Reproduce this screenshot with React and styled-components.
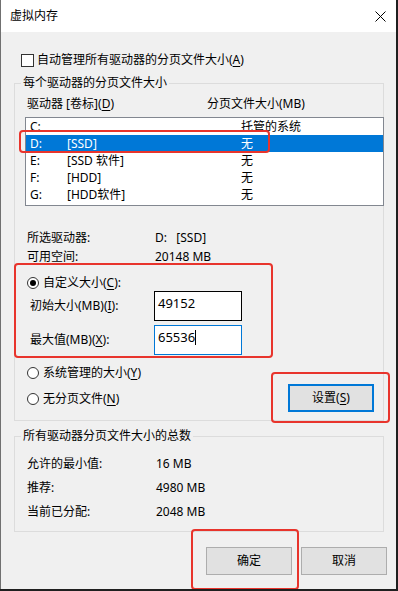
import React from 'react'
import styled, { createGlobalStyle } from 'styled-components'

// Windows 10 "虚拟内存" (virtual memory) dialog, with the red annotation frames on top.

const GlobalStyle = createGlobalStyle`
  html, body {
    margin: 0;
    padding: 0;
    background: #1f1f1f;
  }
  body {
    font-family: "Noto Sans", "Noto Sans CJK SC", sans-serif;
    font-size: 12px;
    color: #000;
  }
`

const Window = styled.div`
  position: relative;
  width: 396px;
  height: 589px;
  box-sizing: border-box;
  border-left: 1px solid #707070;
  background: #f0f0f0;
  display: flex;
  flex-direction: column;
`

const TitleBar = styled.div`
  height: 32px;
  flex: none;
  background: #fff;
  display: flex;
  align-items: center;
  justify-content: space-between;
  padding: 0 10px 0 9px;
`

const Title = styled.span`
  line-height: 16px;
`

const Body = styled.div`
  display: flex;
  flex-direction: column;
  padding: 0 12px 0 13px;
`

const CheckRow = styled.label`
  display: flex;
  align-items: center;
  height: 18px;
  margin: 19px 0 0 7px;
  line-height: 16px;
`

const CheckBox = styled.span`
  width: 13px;
  height: 13px;
  box-sizing: border-box;
  border: 1px solid #333;
  background: #fff;
  margin-right: 3px;
`

const Key = styled.u`
  text-decoration: underline;
  text-underline-offset: 2px;
`

const Group = styled.fieldset`
  margin: ${p => p.$top}px 0 0 0;
  padding: 0 0 ${p => p.$bottom}px 0;
  min-width: 0;
  border: 1px solid #dcdcdc;
  display: flex;
  flex-direction: column;
`

const Legend = styled.legend`
  margin-left: 6px;
  padding: 0 2px;
  line-height: 16px;
`

const Header = styled.div`
  display: flex;
  height: 16px;
  line-height: 16px;
  margin-top: 5px;
  padding-left: 12px;
`

const HeaderCol = styled.span`
  width: ${p => p.$w}px;
  flex: none;
`

const List = styled.div`
  margin: 5px -1px 0 10px;
  height: 89px;
  box-sizing: border-box;
  border: 1px solid #828790;
  background: #fff;
  display: flex;
  flex-direction: column;
`

const ListRow = styled.div`
  display: flex;
  align-items: center;
  height: 17px;
  line-height: 16px;
  padding-left: 4px;
  background: ${p => (p.$selected ? '#0078d7' : 'transparent')};
  color: ${p => (p.$selected ? '#fff' : '#000')};
`

const Cell = styled.span`
  width: ${p => p.$w}px;
  flex: none;
  white-space: pre;
`

const Info = styled.div`
  margin-top: 22px;
  display: flex;
  flex-direction: column;
`

const InfoRow = styled.div`
  display: flex;
  align-items: center;
  height: ${p => p.$h}px;
  line-height: 16px;
  padding-left: 12px;
  margin-top: ${p => p.$gap || 0}px;
`

const InfoLabel = styled.span`
  width: ${p => p.$w}px;
  flex: none;
  white-space: pre;
`

const InfoValue = styled.span`
  white-space: pre;
`

const RadioRow = styled.label`
  display: flex;
  align-items: center;
  height: ${p => p.$h || 17}px;
  line-height: 16px;
  padding-left: 12px;
  margin-top: ${p => p.$gap || 0}px;
`

const Radio = styled.span`
  width: 12px;
  height: 12px;
  box-sizing: border-box;
  border: 1px solid #333;
  border-radius: 50%;
  background: #fff;
  margin-right: 4px;
  display: flex;
  align-items: center;
  justify-content: center;

  &::after {
    content: '';
    width: 6px;
    height: 6px;
    border-radius: 50%;
    background: ${p => (p.$checked ? '#000' : 'transparent')};
  }
`

const SizeRow = styled.div`
  display: flex;
  align-items: center;
  height: 30px;
  line-height: 16px;
  padding-left: 15px;
  margin-top: ${p => p.$gap || 0}px;
`

const SizeLabel = styled.span`
  width: 124px;
  flex: none;
`

const Field = styled.div`
  width: 88px;
  height: 30px;
  box-sizing: border-box;
  border: 1px solid ${p => (p.$focused ? '#0078d7' : '#000')};
  background: #fff;
  padding: 3px 3px 0;
  font-size: 13px;
  line-height: 16px;
  display: flex;
  align-items: flex-start;
`

const Caret = styled.span`
  width: 1px;
  height: 15px;
  background: #000;
  margin-top: 1px;
`

const Lower = styled.div`
  display: flex;
  align-items: flex-start;
`

const RadioColumn = styled.div`
  display: flex;
  flex-direction: column;
  padding-top: 9px;
`

const Button = styled.button`
  width: 86px;
  height: 28px;
  box-sizing: border-box;
  margin: ${p => p.$margin || 0};
  padding: 0;
  border: ${p => (p.$focused ? '2px solid #0078d7' : '1px solid #adadad')};
  background: #e1e1e1;
  font: inherit;
  color: #000;
  line-height: 16px;
`

const Footer = styled.div`
  display: flex;
  justify-content: flex-end;
  gap: 9px;
  margin: 15px -3px 0 0;
`

const Mark = styled.div`
  position: absolute;
  left: ${p => p.$x}px;
  top: ${p => p.$y}px;
  width: ${p => p.$w}px;
  height: ${p => p.$h}px;
  box-sizing: border-box;
  border: 2px solid #e8342c;
  border-radius: 4px;
  pointer-events: none;
`

const CloseIcon = () => (
  <svg width="11" height="11" viewBox="0 0 11 11">
    <path d="M0.5 0.5 L10.5 10.5 M10.5 0.5 L0.5 10.5" stroke="#000" strokeWidth="1" fill="none" />
  </svg>
)

const drives = [
  { letter: 'C:', label: '', size: '托管的系统' },
  { letter: 'D:', label: '[SSD]', size: '无', selected: true },
  { letter: 'E:', label: '[SSD 软件]', size: '无' },
  { letter: 'F:', label: '[HDD]', size: '无' },
  { letter: 'G:', label: '[HDD软件]', size: '无' },
]

const totals = [
  ['允许的最小值:', '16 MB'],
  ['推荐:', '4980 MB'],
  ['当前已分配:', '2048 MB'],
]

export default function App() {
  return (
    <>
      <GlobalStyle />
      <Window>
        <TitleBar>
          <Title>虚拟内存</Title>
          <CloseIcon />
        </TitleBar>

        <Body>
          <CheckRow>
            <CheckBox />
            自动管理所有驱动器的分页文件大小(<Key>A</Key>)
          </CheckRow>

          <Group $top={6} $bottom={8}>
            <Legend>每个驱动器的分页文件大小</Legend>
            <Header>
              <HeaderCol $w={180}>驱动器 [卷标](<Key>D</Key>)</HeaderCol>
              <HeaderCol $w={150}>分页文件大小(MB)</HeaderCol>
            </Header>
            <List>
              {drives.map(d => (
                <ListRow key={d.letter} $selected={d.selected}>
                  <Cell $w={37}>{d.letter}</Cell>
                  <Cell $w={174}>{d.label}</Cell>
                  <Cell $w={100}>{d.size}</Cell>
                </ListRow>
              ))}
            </List>

            <Info>
              <InfoRow $h={19}>
                <InfoLabel $w={128}>所选驱动器:</InfoLabel>
                <InfoValue>{'D:   [SSD]'}</InfoValue>
              </InfoRow>
              <InfoRow $h={19}>
                <InfoLabel $w={128}>可用空间:</InfoLabel>
                <InfoValue>20148 MB</InfoValue>
              </InfoRow>
            </Info>

            <RadioRow $h={16} $gap={9}>
              <Radio $checked />
              自定义大小(<Key>C</Key>):
            </RadioRow>
            <SizeRow>
              <SizeLabel>初始大小(MB)(<Key>I</Key>):</SizeLabel>
              <Field>49152</Field>
            </SizeRow>
            <SizeRow $gap={4}>
              <SizeLabel>最大值(MB)(<Key>X</Key>):</SizeLabel>
              <Field $focused>
                65536
                <Caret />
              </Field>
            </SizeRow>

            <Lower>
              <RadioColumn>
                <RadioRow>
                  <Radio />
                  系统管理的大小(<Key>Y</Key>)
                </RadioRow>
                <RadioRow $gap={9}>
                  <Radio />
                  无分页文件(<Key>N</Key>)
                </RadioRow>
              </RadioColumn>
              <Button $focused $margin="29px 9px 0 auto">
                设置(<Key>S</Key>)
              </Button>
            </Lower>
          </Group>

          <Group $top={7} $bottom={10}>
            <Legend>所有驱动器分页文件大小的总数</Legend>
            {totals.map(([label, value], i) => (
              <InfoRow key={label} $h={18} $gap={i === 0 ? 11 : 6}>
                <InfoLabel $w={129}>{label}</InfoLabel>
                <InfoValue>{value}</InfoValue>
              </InfoRow>
            ))}
          </Group>

          <Footer>
            <Button>确定</Button>
            <Button>取消</Button>
          </Footer>
        </Body>

        <Mark $x={18} $y={130} $w={251} $h={23} />
        <Mark $x={13} $y={263} $w={259} $h={95} />
        <Mark $x={270} $y={372} $w={119} $h={51} />
        <Mark $x={190} $y={529} $w={108} $h={61} />
      </Window>
    </>
  )
}
